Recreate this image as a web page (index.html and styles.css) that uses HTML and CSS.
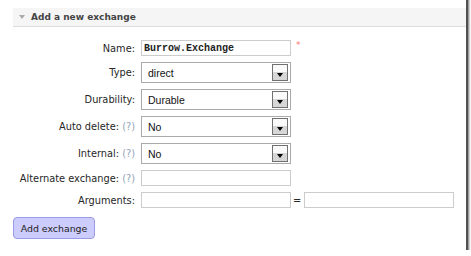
FILE: index.html
```html
<!DOCTYPE html>
<html lang="en">
<head>
    <meta charset="UTF-8">
    <title>Add a new exchange</title>
    <link rel="stylesheet" href="styles.css">
</head>
<body>

    <div class="frame">
        <h2 class="section-head"><span class="toggle"></span>Add a new exchange</h2>

        <form class="exchange-form" onsubmit="return false;">
            <div class="form-row">
                <label class="field-label" for="name">Name:</label>
                <input class="text-input mono" type="text" id="name" value="Burrow.Exchange">
                <span class="required">*</span>
            </div>
            <div class="form-row">
                <label class="field-label">Type:</label>
                <div class="select-box"><span class="select-value">direct</span><span class="select-btn"><i></i></span></div>
            </div>
            <div class="form-row">
                <label class="field-label">Durability:</label>
                <div class="select-box"><span class="select-value">Durable</span><span class="select-btn"><i></i></span></div>
            </div>
            <div class="form-row">
                <label class="field-label">Auto delete: <span class="help">(?)</span></label>
                <div class="select-box"><span class="select-value">No</span><span class="select-btn"><i></i></span></div>
            </div>
            <div class="form-row">
                <label class="field-label">Internal: <span class="help">(?)</span></label>
                <div class="select-box"><span class="select-value">No</span><span class="select-btn"><i></i></span></div>
            </div>
            <div class="form-row">
                <label class="field-label" for="alternate">Alternate exchange: <span class="help">(?)</span></label>
                <input class="text-input" type="text" id="alternate">
            </div>
            <div class="form-row">
                <label class="field-label" for="arg-key">Arguments:</label>
                <input class="text-input" type="text" id="arg-key">
                <span class="equals">=</span>
                <input class="text-input" type="text" id="arg-value">
            </div>
            <button class="add-btn" type="submit">Add exchange</button>
        </form>
    </div>

</body>
</html>
```

FILE: styles.css
```css
body {
    margin: 0;
    background-color: #fff;
    font-family: "DejaVu Sans", Verdana, sans-serif;
    font-size: 9.8px;
    color: #262626;
}
.frame {
    width: 453px;
    height: 242px;
    margin-top: -10px;
    padding: 18px 0 0 13px;
    background-color: #fff;
    box-shadow: 2px 2px 0 #505050, 3px 3px 2px #707070;
}
.section-head {
    display: flex;
    align-items: center;
    height: 18px;
    margin: 0;
    padding-left: 6px;
    background-color: #f5f5f5;
    border-bottom: 1px solid #ddd;
    font-size: 9px;
    color: #444;
}
.toggle {
    width: 0;
    height: 0;
    margin-right: 6px;
    border-left: 3.5px solid transparent;
    border-right: 3.5px solid transparent;
    border-top: 4px solid #aaa;
}
.exchange-form {
    display: flex;
    flex-direction: column;
    align-items: flex-start;
    gap: 6px;
    margin-top: 13px;
}
.form-row {
    display: flex;
    align-items: center;
}
.field-label {
    width: 122px;
    margin-right: 6px;
    text-align: right;
    white-space: nowrap;
}
.help {
    color: #93a3b8;
}
.text-input {
    box-sizing: border-box;
    width: 150px;
    height: 16px;
    margin: 0;
    padding: 0 2px;
    border: 1px solid #ccc;
    font: 10px "Liberation Sans", Arial, sans-serif;
}
.text-input.mono {
    font: bold 10px "Liberation Mono", "DejaVu Sans Mono", monospace;
    color: #222;
}
.required {
    align-self: flex-start;
    margin-left: 5px;
    color: #f77;
    font-size: 9px;
}
.equals {
    margin: 0 3px 0 2px;
}
.select-box {
    box-sizing: border-box;
    display: flex;
    align-items: center;
    width: 150px;
    height: 21px;
    border: 1px solid #aaa;
    font-family: "Liberation Sans", Arial, sans-serif;
    font-size: 10.5px;
    color: #111;
}
.select-value {
    padding-left: 6px;
}
.select-btn {
    box-sizing: border-box;
    display: flex;
    align-items: flex-end;
    justify-content: center;
    width: 16px;
    height: 17px;
    margin: 0 2px 0 auto;
    padding-bottom: 3px;
    border: 1px solid #707070;
    background: linear-gradient(#fafafa 45%, #d6d6d6 45%);
}
.select-btn i {
    width: 0;
    height: 0;
    border-left: 3.5px solid transparent;
    border-right: 3.5px solid transparent;
    border-top: 4px solid #000;
}
.add-btn {
    width: 82px;
    height: 22px;
    margin-top: 3px;
    padding: 0;
    background-color: #ccccff;
    border: 1px solid #9b9be6;
    border-radius: 4px;
    font-family: "DejaVu Sans", Verdana, sans-serif;
    font-size: 9.4px;
    color: #222;
    cursor: pointer;
}
```
